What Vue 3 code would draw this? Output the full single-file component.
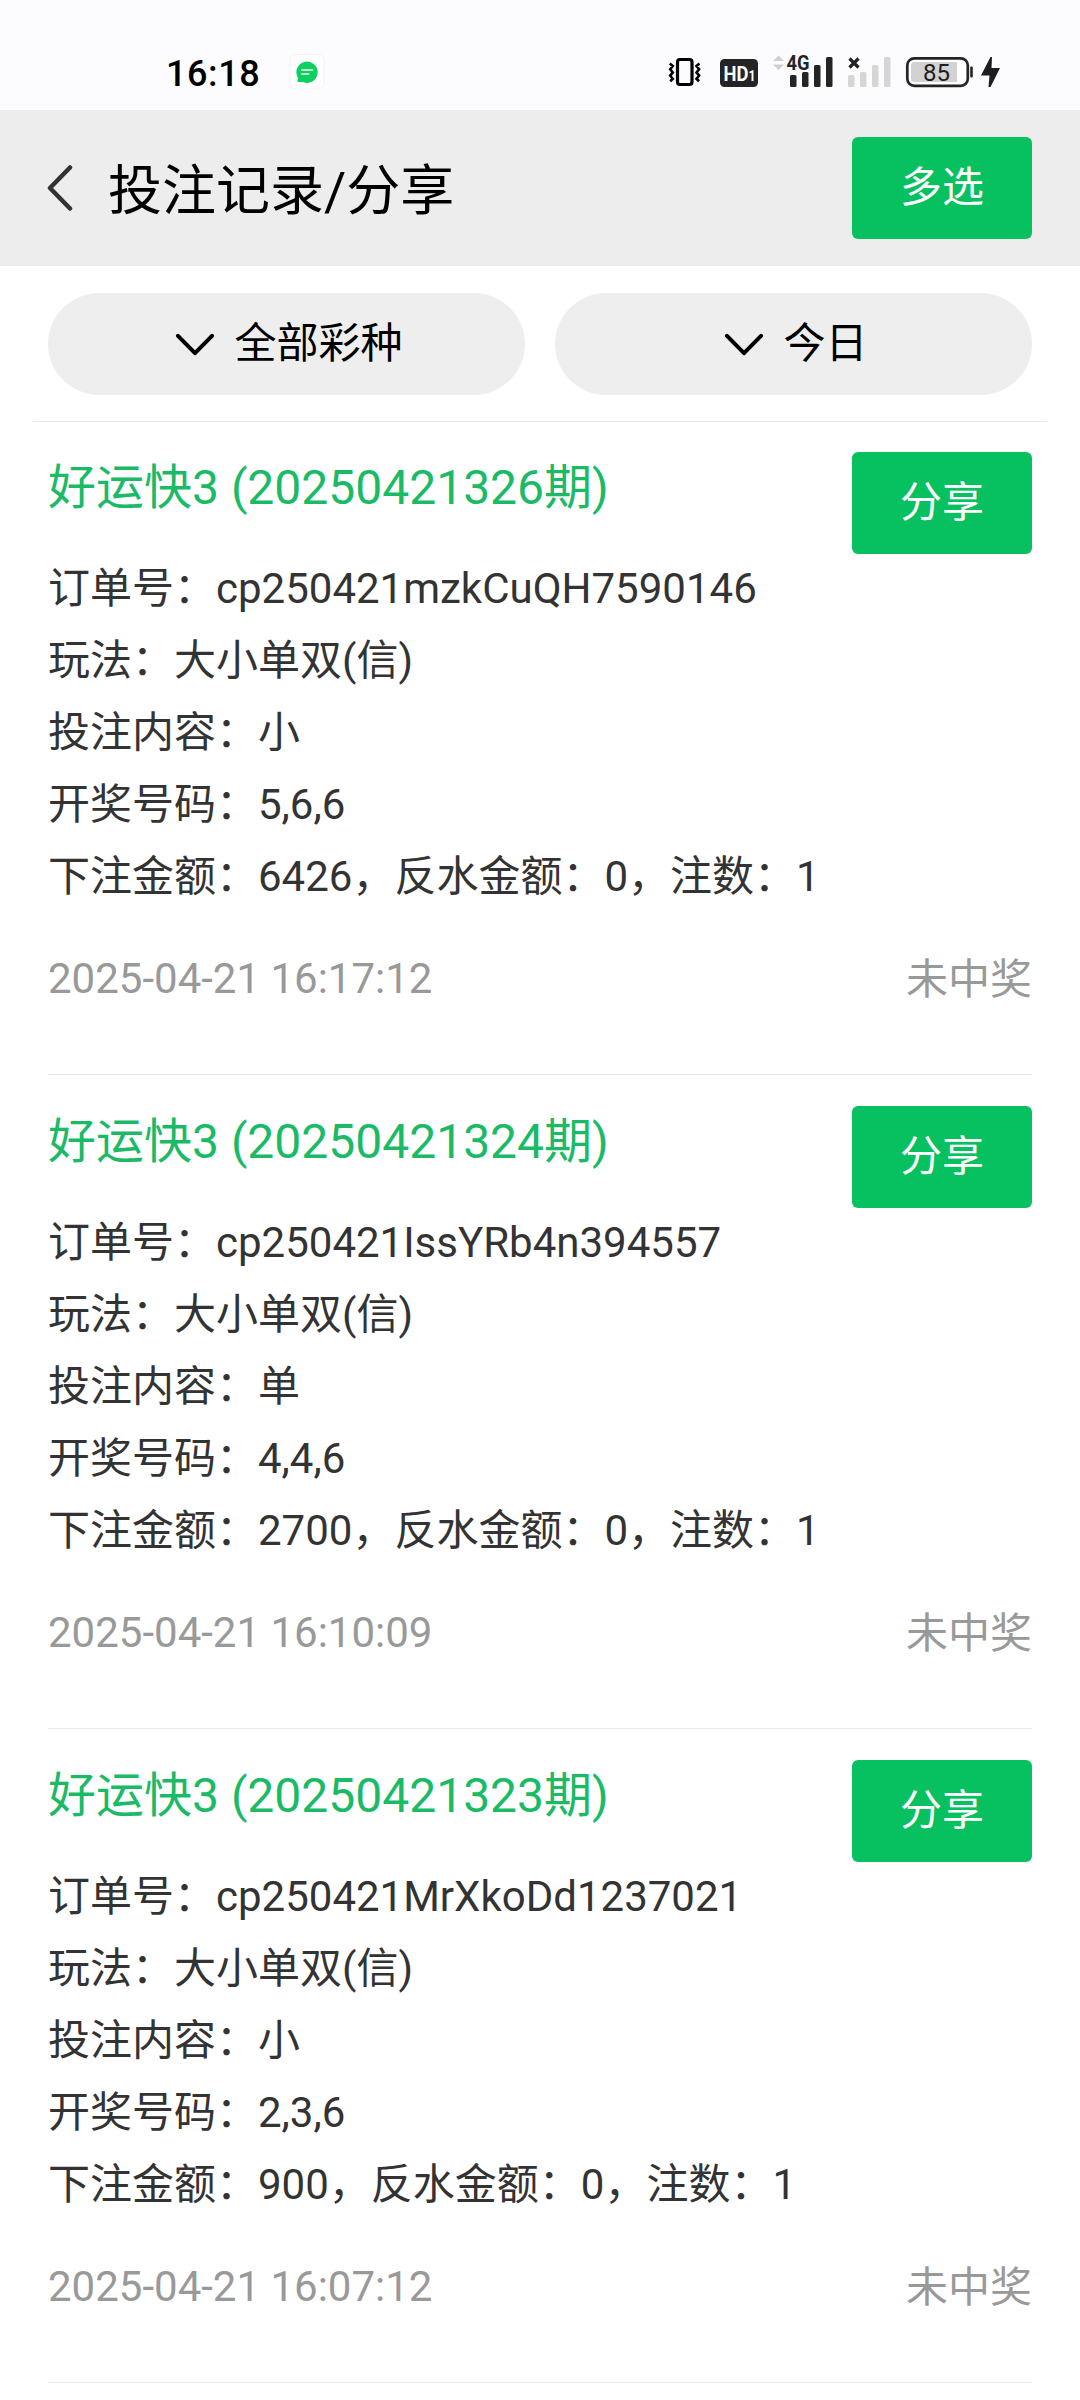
<script setup>
const records = [
  { issue: '20250421326', order: 'cp250421mzkCuQH7590146', play: '大小单双(信)', content: '小', numbers: '5,6,6', amount: 6426, rebate: 0, count: 1, time: '2025-04-21 16:17:12', status: '未中奖' },
  { issue: '20250421324', order: 'cp250421IssYRb4n394557', play: '大小单双(信)', content: '单', numbers: '4,4,6', amount: 2700, rebate: 0, count: 1, time: '2025-04-21 16:10:09', status: '未中奖' },
  { issue: '20250421323', order: 'cp250421MrXkoDd1237021', play: '大小单双(信)', content: '小', numbers: '2,3,6', amount: 900, rebate: 0, count: 1, time: '2025-04-21 16:07:12', status: '未中奖' },
]
const filters = ['全部彩种', '今日']
</script>

<template>
  <div class="page">
    <div class="status">
      <span class="clock">16:18</span>
      <svg class="chat" width="36" height="40" viewBox="289 50 36 40">
        <rect x="290" y="54.500" width="34" height="34.500" rx="6" fill="#fff" stroke="#f3f3f5" stroke-width="1" />
        <path d="M307 61.500a11 10.700 0 1 1-4.500 20.600L297.500 82l.3-4.300A10.800 10.800 0 0 1 307 61.500z" fill="#0bd05e" />
        <path d="M302 70h10.500M302 74h6.500" stroke="#c6f7d8" stroke-width="2" stroke-linecap="round" />
      </svg>
      <div class="spacer"></div>
      <svg width="34" height="40" viewBox="668 50 34 40" fill="none" stroke="#000">
        <rect x="677.500" y="59.500" width="14.500" height="25" rx="2.500" stroke-width="3.200" />
        <path d="M669.800 63.500l3 2.500-2.600 3.200 2.600 3.200-2.600 3.200 2.600 3.200-2.600 2.400M699.500 63.500l-3 2.500 2.600 3.200-2.600 3.200 2.600 3.200-2.600 3.200 2.600 2.400" stroke-width="2.600" />
      </svg>
      <svg class="hd" width="40" height="40" viewBox="719 50 40 40">
        <rect x="720" y="59" width="38" height="28" rx="4.500" fill="#242424" />
        <text x="723.500" y="81" font-size="21" font-weight="700" fill="#fff" textLength="32" lengthAdjust="spacingAndGlyphs">HD<tspan font-size="14">1</tspan></text>
      </svg>
      <svg class="sim1" width="62" height="40" viewBox="772 50 62 40">
        <path d="M778.500 55.500l5.500 5.500h-11zM778.500 70l5.500-5.500h-11z" fill="#cfcfcf" />
        <g fill="#242424">
          <rect x="790" y="75" width="6.500" height="12" rx="1.500" />
          <rect x="802" y="72" width="6.500" height="15" rx="1.500" />
          <rect x="814" y="65" width="6.500" height="22" rx="1.500" />
          <rect x="826" y="57" width="6.500" height="30" rx="1.500" />
        </g>
        <text x="786.500" y="70" font-size="21" font-weight="700" fill="#242424" stroke="#fcfcff" stroke-width="2" paint-order="stroke" textLength="23" lengthAdjust="spacingAndGlyphs">4G</text>
      </svg>
      <svg class="sim2" width="46" height="40" viewBox="846 50 46 40">
        <g fill="#d6d6d6">
          <rect x="848" y="75" width="6.500" height="12" rx="1.500" />
          <rect x="860" y="72" width="6.500" height="15" rx="1.500" />
          <rect x="872" y="65" width="6.500" height="22" rx="1.500" />
          <rect x="884" y="57" width="6.500" height="30" rx="1.500" />
        </g>
        <path d="M849.500 58.500l9 9M858.500 58.500l-9 9" stroke="#242424" stroke-width="3.200" />
      </svg>
      <svg class="battery" width="69" height="40" viewBox="905 50 69 40">
        <rect x="907.300" y="58.300" width="60.500" height="27.500" rx="7" fill="#fff" stroke="#242424" stroke-width="2.700" />
        <path d="M914.500 62H957v20h-42.500a3.500 3.500 0 0 1-3.500-3.500v-13a3.500 3.500 0 0 1 3.500-3.500z" fill="#d2d2d2" />
        <rect x="970.200" y="66.500" width="2.600" height="11" rx="1" fill="#242424" />
        <text x="923" y="81" font-size="24" fill="#1d1d1d">85</text>
      </svg>
      <svg class="bolt" width="22" height="40" viewBox="980 50 22 40">
        <path d="M990.500 57L981 75.500h8.500L988.500 87l2 0L1000 68h-8.500L992 57z" fill="#1d1d1d" />
      </svg>
    </div>

    <header class="bar">
      <svg class="back" width="28" height="50" viewBox="0 0 28 50" fill="none" stroke="#333" stroke-width="4.500" stroke-linecap="round" stroke-linejoin="round">
        <path d="M25 4.500L5 25l20 20.500" />
      </svg>
      <h1>投注记录/分享</h1>
      <button class="btn">多选</button>
    </header>

    <div class="filters">
      <div v-for="f in filters" :key="f" class="pill">
        <svg class="chev" width="40" height="24" viewBox="0 0 40 24" fill="none" stroke="#000" stroke-width="4" stroke-linecap="round" stroke-linejoin="round">
          <path d="M3 3.800L20 21.200 37 3.800" />
        </svg>
        <span>{{ f }}</span>
      </div>
    </div>

    <main class="list">
      <article v-for="r in records" :key="r.issue" class="item">
        <div class="head">
          <h2>好运快3 ({{ r.issue }}期)</h2>
          <button class="btn">分享</button>
        </div>
        <div class="body">
          <p>订单号：{{ r.order }}</p>
          <p>玩法：{{ r.play }}</p>
          <p>投注内容：{{ r.content }}</p>
          <p>开奖号码：{{ r.numbers }}</p>
          <p>下注金额：{{ r.amount }}，反水金额：{{ r.rebate }}，注数：{{ r.count }}</p>
        </div>
        <div class="foot">
          <span>{{ r.time }}</span>
          <span class="result">{{ r.status }}</span>
        </div>
      </article>
    </main>
  </div>
</template>

<style>
body {
  background: #fff;
}
</style>

<style scoped>
.page {
  width: 1080px;
  height: 2400px;
  overflow: hidden;
  background: #fff;
  font-family: Roboto, "Noto Sans CJK SC", sans-serif;
  font-size: 42px;
  color: #333;
}
.status {
  display: flex;
  align-items: center;
  height: 110px;
  box-sizing: border-box;
  padding: 30px 78px 0 166px;
  background: #fcfcff;
}
.status svg {
  flex: none;
}
.clock {
  width: 123px;
  margin-top: 7px;
  font-size: 36px;
  font-weight: 500;
  letter-spacing: 0.6px;
  line-height: 40px;
  color: #000;
}
.spacer {
  flex: 1;
}
.hd {
  margin-left: 17px;
}
.sim1,
.battery {
  margin-left: 13px;
}
.sim2 {
  margin-left: 12px;
}
.bolt {
  margin-left: 6px;
}
.bar {
  display: flex;
  align-items: center;
  height: 156px;
  box-sizing: border-box;
  padding: 0 48px 0 45px;
  background: #ededed;
}
h1,
h2,
p {
  margin: 0;
  font-weight: 400;
}
h1 {
  flex: 1;
  margin-left: 35px;
  padding-top: 7px;
  font-size: 54px;
  line-height: 72px;
  color: #000;
}
.btn {
  flex: none;
  width: 180px;
  height: 102px;
  padding: 0 0 1px;
  border: 0;
  border-radius: 6px;
  background: #07c160;
  color: #fff;
  font: inherit;
  line-height: 60px;
}
.filters {
  display: flex;
  gap: 30px;
  margin: 0 33px;
  padding: 27px 15px 26px;
  border-bottom: 1px solid #ebebeb;
}
.pill {
  flex: 1;
  display: flex;
  align-items: center;
  justify-content: center;
  height: 102px;
  box-sizing: border-box;
  border-radius: 51px;
  background: #eee;
  color: #000;
  line-height: 60px;
}
.chev {
  margin: 0 19px 0 5px;
}
.list {
  padding: 0 48px;
}
.item {
  height: 653px;
  box-sizing: border-box;
  margin-bottom: 1px;
  padding-top: 30px;
  border-bottom: 1px solid #ebebeb;
}
.head {
  display: flex;
  justify-content: space-between;
  align-items: flex-start;
  height: 101px;
}
h2 {
  font-size: 48px;
  line-height: 72px;
  color: #1aba66;
}
.body {
  line-height: 72px;
}
.foot {
  display: flex;
  justify-content: space-between;
  margin-top: 30px;
  line-height: 72px;
  color: #999;
}
.result {
  padding-top: 1px;
}
</style>
